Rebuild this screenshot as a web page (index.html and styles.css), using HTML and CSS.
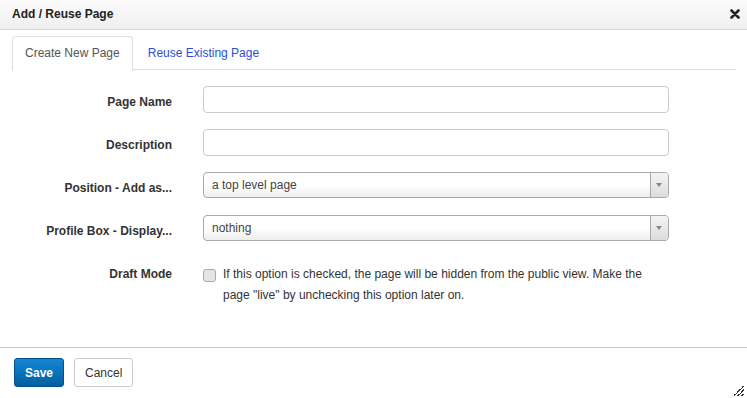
FILE: index.html
```html
<!DOCTYPE html>
<html lang="en">
<head>
  <meta charset="UTF-8" />
  <title>Add / Reuse Page</title>
  <link rel="stylesheet" href="styles.css">
</head>
<body>
  <div class="dialog">
    <div class="titlebar">
      <span class="title">Add / Reuse Page</span>
      <svg class="close" width="10" height="10" viewBox="0 0 10 10">
        <path d="M1.5 1.5 L8.5 8.5 M8.5 1.5 L1.5 8.5" stroke="#222" stroke-width="2.6" stroke-linecap="round"/>
      </svg>
    </div>

    <div class="content">
      <div class="tabs">
        <div class="tab active">Create New Page</div>
        <div class="tab">Reuse Existing Page</div>
      </div>

      <div class="form">
        <label class="label">Page Name</label>
        <div class="field"><input type="text" class="text-input"></div>

        <label class="label">Description</label>
        <div class="field"><input type="text" class="text-input"></div>

        <label class="label">Position - Add as...</label>
        <div class="field">
          <div class="select"><span>a top level page</span><span class="arrow"></span></div>
        </div>

        <label class="label">Profile Box - Display...</label>
        <div class="field">
          <div class="select"><span>nothing</span><span class="arrow"></span></div>
        </div>

        <label class="label draft-label">Draft Mode</label>
        <div class="field draft">
          <span class="checkbox"></span>
          <p>If this option is checked, the page will be hidden from the public view. Make the page "live" by unchecking this option later on.</p>
        </div>
      </div>
    </div>

    <div class="footer">
      <button class="btn btn-primary">Save</button>
      <button class="btn">Cancel</button>
    </div>
    <div class="resize"></div>
  </div>
</body>
</html>
```

FILE: styles.css
```css
body {
  margin: 0;
  font-family: "Liberation Sans", Arial, sans-serif;
  font-size: 12px;
  color: #333;
  background: #fff;
}

.dialog {
  width: 747px;
  height: 398px;
  display: flex;
  flex-direction: column;
  position: relative;
  overflow: hidden;
}

.titlebar {
  height: 29px;
  display: flex;
  align-items: center;
  justify-content: space-between;
  padding: 0 7px 0 12px;
  background: linear-gradient(#fcfcfc, #efefef);
  border-bottom: 1px solid #d4d4d4;
  flex-shrink: 0;
}

.title {
  font-weight: bold;
  color: #222;
  margin-top: -1px;
}

.close {
  margin-top: -1px;
}

.content {
  flex: 1;
  padding: 6px 11px 0 12px;
}

.tabs {
  display: flex;
  border-bottom: 1px solid #ddd;
  height: 33px;
}

.tab {
  padding: 0 12px;
  line-height: 32px;
  font-size: 12px;
  color: #2a4fd6;
  border: 1px solid transparent;
  margin-right: 2px;
  border-radius: 4px 4px 0 0;
}

.tab.active {
  color: #555;
  background: #fff;
  border-color: #ddd;
  border-bottom-color: #fff;
  height: 33px;
}

.form {
  display: grid;
  grid-template-columns: 160px 466px;
  grid-template-rows: repeat(4, 27px) auto;
  column-gap: 31px;
  row-gap: 16px;
  margin-top: 16px;
}

.label {
  text-align: right;
  font-weight: bold;
  line-height: 26px;
  padding-top: 3px;
  color: #333;
}

.text-input {
  box-sizing: border-box;
  width: 466px;
  height: 27px;
  border: 1px solid #ccc;
  border-radius: 4px;
  margin: 0;
  padding: 0 8px;
  font: inherit;
}

.select {
  box-sizing: border-box;
  height: 26px;
  border: 1px solid #aaa;
  border-radius: 4px;
  background: linear-gradient(#fff 50%, #eee);
  display: flex;
  align-items: center;
  justify-content: space-between;
  padding-left: 8px;
  color: #444;
}

.arrow {
  width: 17px;
  height: 100%;
  border-left: 1px solid #aaa;
  background: linear-gradient(#f4f4f4, #ddd);
  border-radius: 0 3px 3px 0;
  position: relative;
}

.arrow::after {
  content: "";
  position: absolute;
  left: 5px;
  top: 10px;
  border-left: 3px solid transparent;
  border-right: 3px solid transparent;
  border-top: 4px solid #888;
}

.draft-label {
  line-height: 14px;
  padding-top: 9px;
}

.draft {
  display: flex;
  align-items: flex-start;
  gap: 7px;
  margin-top: 10px;
}

.checkbox {
  flex-shrink: 0;
  width: 11px;
  height: 11px;
  border: 1px solid #aaa;
  border-radius: 3px;
  background: #e4e4e4;
  margin-top: 1px;
}

.draft p {
  margin: -4px 0 0;
  line-height: 21px;
  color: #333;
}

.footer {
  height: 51px;
  flex-shrink: 0;
  border-top: 1px solid #c6c6c6;
  display: flex;
  align-items: flex-start;
  gap: 10px;
  padding: 10px 0 0 14px;
  box-sizing: border-box;
}

.btn {
  height: 29px;
  padding: 0 10px;
  font: inherit;
  font-size: 12px;
  color: #333;
  background: #fff;
  border: 1px solid #ccc;
  border-radius: 3px;
}

.btn-primary {
  width: 50px;
  color: #fff;
  font-weight: bold;
  background: linear-gradient(#1487d4, #005f9e);
  border-color: #00508a;
}

.resize {
  position: absolute;
  right: 3px;
  bottom: 2px;
  width: 10px;
  height: 10px;
  background: linear-gradient(135deg, transparent 45%, #333 45%, #333 52%, transparent 52%, transparent 65%, #333 65%, #333 72%, transparent 72%, transparent 85%, #333 85%, #333 92%, transparent 92%);
}
```
